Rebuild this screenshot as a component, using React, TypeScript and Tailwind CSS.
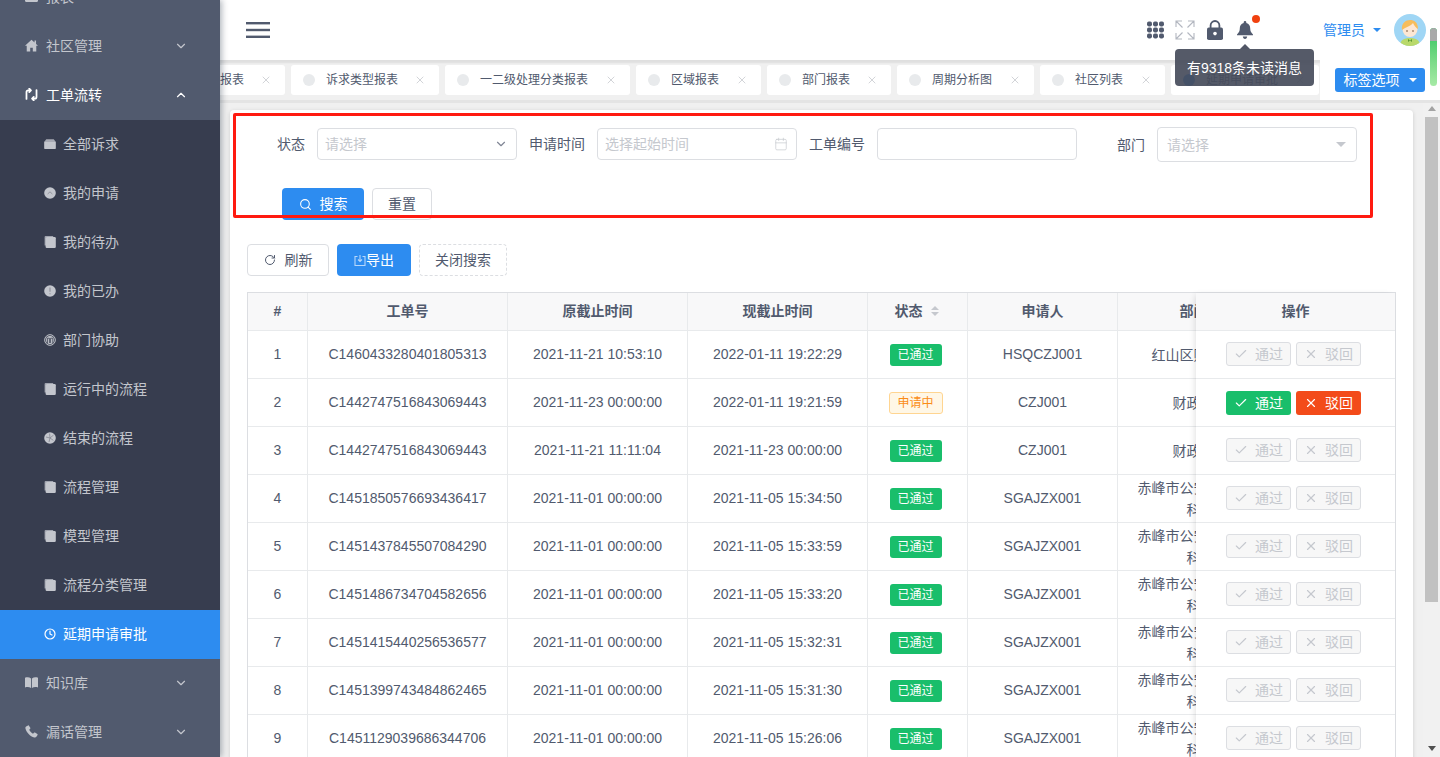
import React from "react";
import { Check, X, Search, RotateCw, ChevronDown, ChevronUp, Clock, Calendar } from "lucide-react";

type IP = { className?: string };

const HomeI = ({ className }: IP) => (
  <svg viewBox="0 0 12 12" className={className} fill="currentColor"><path d="M6 .8 0 6.2h1.6V11.6h3.2V8h2.4v3.6h3.2V6.2H12L10.2 4.6V1.4H8.8v1.9L6 .8z" /></svg>
);
const FlowI = ({ className }: IP) => (
  <svg viewBox="0 0 14 14" className={className} fill="none" stroke="currentColor" strokeWidth="1.9" strokeLinecap="round" strokeLinejoin="round"><path d="M1.600 11.800V4.400c0-1.200.7-1.800 1.800-1.800H6.200M4.600.8 6.400 2.600 4.600 4.400" /><path d="M12.400 2.200v7.400c0 1.200-.7 1.800-1.800 1.800H7.800M9.400 9.600l-1.800 1.800 1.800 1.800" /></svg>
);
const ReportI = ({ className }: IP) => (
  <svg viewBox="0 0 12 12" className={className} fill="currentColor"><rect x="0" y="1" width="12" height="10" rx="1" /></svg>
);
const BookI = ({ className }: IP) => (
  <svg viewBox="0 0 12 12" className={className} fill="currentColor"><path d="M0 1.600C1.800 1 4 1 5.600 2.200V11C4 10 1.800 10 0 10.600V1.600zM12 1.600C10.200 1 8 1 6.400 2.200V11C8 10 10.200 10 12 10.600V1.600z" /></svg>
);
const PhoneI = ({ className }: IP) => (
  <svg viewBox="0 0 12 12" className={className} fill="currentColor"><path d="M2.800.4 1 1.400C.4 1.800.2 2.400.4 3.200 1.400 7 4.600 10.400 8.600 11.500c.8.200 1.500 0 1.900-.6l1.100-1.600c.2-.3.100-.7-.2-.9L9.200 7c-.3-.2-.6-.1-.9.100L7.400 8C6 7.200 4.600 5.700 3.900 4.300l.9-.9c.2-.2.300-.6.100-.9L3.600.6C3.400.3 3.100.3 2.800.4z" /></svg>
);
const FilingI = ({ className }: IP) => (
  <svg viewBox="0 0 14 12" className={className} fill="currentColor"><path d="M2.600.6h8.800L13.600 3.400H.4z" opacity=".8" /><rect x=".2" y="3" width="13.600" height="8.800" rx=".8" /></svg>
);
const DropI = ({ className }: IP) => (
  <svg viewBox="0 0 12 12" className={className}><circle cx="6" cy="6" r="5.800" fill="currentColor" /><path d="M3.600 7 6 4.800 8.400 7" fill="none" stroke="#8d909a" strokeWidth=".9" /></svg>
);
const CopyI = ({ className }: IP) => (
  <svg viewBox="0 0 12 12" className={className} fill="currentColor"><path d="M1.600 0h7.600v1H2v8.600H.6V1A1 1 0 0 1 1.600 0z" opacity=".75" /><rect x="1.600" y="1" width="10.200" height="11" rx="1.200" /></svg>
);
const AlertI = ({ className }: IP) => (
  <svg viewBox="0 0 12 12" className={className}><circle cx="6" cy="6" r="5.800" fill="currentColor" /><path d="M6 2.600v4.200M6 8.200v1" stroke="#8d909a" strokeWidth="1.100" /></svg>
);
const PeopleI = ({ className }: IP) => (
  <svg viewBox="0 0 12 12" className={className}><circle cx="6" cy="6" r="5.300" fill="none" stroke="currentColor" strokeWidth="1" /><circle cx="6" cy="6" r="4" fill="currentColor" /><path d="M3.400 9V4.200h2V9M6.600 9V4.200h2.200V9" fill="none" stroke="#373d4f" strokeWidth=".8" /></svg>
);
const ApertureI = ({ className }: IP) => (
  <svg viewBox="0 0 12 12" className={className}><circle cx="6" cy="6" r="5.800" fill="currentColor" /><path d="M6 6 9.600 3M6 6 2 5M6 6l-1 4M6 6l3.400 2.400M6 6 5.600 1.600" stroke="#7c808b" strokeWidth=".7" /></svg>
);
const GridI = ({ className }: IP) => (
  <svg viewBox="0 0 17 18" className={className} fill="currentColor">
    {[2.5, 8.5, 14.5].flatMap((x) => [3, 9, 15].map((y) => <rect key={`${x}-${y}`} x={x - 2.5} y={y - 2.4} width="5" height="4.800" rx="1.800" />))}
  </svg>
);
const FullI = ({ className }: IP) => (
  <svg viewBox="0 0 20 20" className={className} fill="none" stroke="currentColor" strokeWidth="1.100"><path d="M1 7V1h6M1 1l6.500 6.500M13 1h6v6M19 1l-6.500 6.500M1 13v6h6M1 19l6.500-6.500M19 13v6h-6M19 19l-6.500-6.500" /></svg>
);
const LockI = ({ className }: IP) => (
  <svg viewBox="0 0 16 20" className={className}><path d="M3.600 9V5.400a4.400 4.400 0 0 1 8.800 0V9" fill="none" stroke="currentColor" strokeWidth="1.800" /><rect x="0" y="7.600" width="16" height="12.400" rx="1.800" fill="currentColor" /><circle cx="8" cy="13.600" r="1.800" fill="#fff" /></svg>
);
const BellI = ({ className }: IP) => (
  <svg viewBox="0 0 16 18" className={className} fill="currentColor"><path d="M8 0c.8 0 1.300.6 1.300 1.300v.6c2.700.6 3.900 2.700 3.900 5.300 0 3 .9 4.200 2.800 6.200v.9H0v-.9c1.900-2 2.800-3.200 2.800-6.200 0-2.600 1.200-4.700 3.900-5.300v-.6C6.700.6 7.200 0 8 0z" /><path d="M5.800 15.600h4.400C10 17 9.200 18 8 18s-2-1-2.200-2.400z" /></svg>
);
const AvatarI = ({ className }: IP) => (
  <svg viewBox="0 0 32 32" className={className}>
    <defs><clipPath id="avc"><circle cx="16" cy="16" r="16" /></clipPath></defs>
    <g clipPath="url(#avc)">
      <rect width="32" height="32" fill="#9fd6f5" />
      <path d="M6 32c0-6 4-8 10-8s10 2 10 8z" fill="#b9d96a" />
      <path d="M14 25l2 1.500 2-1.500v3l-2-1.500-2 1.500z" fill="#5d9a33" />
      <circle cx="16" cy="15.500" r="7.500" fill="#fde7d3" />
      <path d="M8 16c-1-7 4-10 8-10s8 2 8 9c-2-1-4-4-5-6-2 3-7 4-11 7z" fill="#f6bd5b" />
      <circle cx="13" cy="17" r=".8" fill="#6b4a2e" />
      <circle cx="19" cy="17" r=".8" fill="#6b4a2e" />
    </g>
  </svg>
);

const menuTop = "flex h-[49px] shrink-0 items-center pb-[2px] pl-[25px] text-sm";
const menuSub = "flex h-[49px] shrink-0 items-center pb-[2px] pl-[44px] text-sm";

const subs: [string, React.FC<IP>][] = [
  ["全部诉求", FilingI],
  ["我的申请", DropI],
  ["我的待办", CopyI],
  ["我的已办", AlertI],
  ["部门协助", PeopleI],
  ["运行中的流程", CopyI],
  ["结束的流程", ApertureI],
  ["流程管理", CopyI],
  ["模型管理", CopyI],
  ["流程分类管理", CopyI],
];

function Top({ label, Icon, open }: { label: string; Icon: React.FC<IP>; open?: boolean }) {
  return (
    <div className={`${menuTop} ${open ? "text-white" : "text-[#c3c6cd]"}`}>
      <Icon className="h-[13px] w-[13px] shrink-0" />
      <span className="ml-[8px]">{label}</span>
      {open ? (
        <ChevronUp className="ml-auto mr-[32px] h-[14px] w-[14px]" strokeWidth={2} />
      ) : (
        <ChevronDown className="ml-auto mr-[32px] h-[14px] w-[14px]" strokeWidth={2} />
      )}
    </div>
  );
}

const tabs = [
  { t: "诉求类型报表", w: "w-[148px]" },
  { t: "一二级处理分类报表", w: "w-[185px]" },
  { t: "区域报表", w: "w-[125px]" },
  { t: "部门报表", w: "w-[124px]" },
  { t: "周期分析图", w: "w-[137px]" },
  { t: "社区列表", w: "w-[125px]" },
  { t: "延期申请审批", w: "w-[148px]", active: true },
];

function Tab({ t, w, active }: { t: string; w: string; active?: boolean }) {
  return (
    <div className={`flex h-[30px] shrink-0 items-center rounded-[3px] bg-white pl-[12px] pr-[13px] text-xs text-[#515a6e] ${w}`}>
      <span className={`h-[12px] w-[12px] rounded-full ${active ? "bg-[#2d8cf0]" : "bg-[#e8eaec]"}`} />
      <span className="ml-[11px] whitespace-nowrap">{t}</span>
      <X className="ml-auto h-[12px] w-[12px] text-[#b4b7be]" strokeWidth={1.2} />
    </div>
  );
}

type Row = { n: number; id: string; a: string; b: string; st: "ok" | "ing"; u: string; d: string; on?: boolean };
const FAR = "赤峰市公安局交警科";
const rows: Row[] = [
  { n: 1, id: "C1460433280401805313", a: "2021-11-21 10:53:10", b: "2022-01-11 19:22:29", st: "ok", u: "HSQCZJ001", d: "红山区财政局" },
  { n: 2, id: "C1442747516843069443", a: "2021-11-23 00:00:00", b: "2022-01-11 19:21:59", st: "ing", u: "CZJ001", d: "财政局", on: true },
  { n: 3, id: "C1442747516843069443", a: "2021-11-21 11:11:04", b: "2021-11-23 00:00:00", st: "ok", u: "CZJ001", d: "财政局" },
  { n: 4, id: "C1451850576693436417", a: "2021-11-01 00:00:00", b: "2021-11-05 15:34:50", st: "ok", u: "SGAJZX001", d: FAR },
  { n: 5, id: "C1451437845507084290", a: "2021-11-01 00:00:00", b: "2021-11-05 15:33:59", st: "ok", u: "SGAJZX001", d: FAR },
  { n: 6, id: "C1451486734704582656", a: "2021-11-01 00:00:00", b: "2021-11-05 15:33:20", st: "ok", u: "SGAJZX001", d: FAR },
  { n: 7, id: "C1451415440256536577", a: "2021-11-01 00:00:00", b: "2021-11-05 15:32:31", st: "ok", u: "SGAJZX001", d: FAR },
  { n: 8, id: "C1451399743484862465", a: "2021-11-01 00:00:00", b: "2021-11-05 15:31:30", st: "ok", u: "SGAJZX001", d: FAR },
  { n: 9, id: "C1451129039686344706", a: "2021-11-01 00:00:00", b: "2021-11-05 15:26:06", st: "ok", u: "SGAJZX001", d: FAR },
];

const cell = "flex shrink-0 items-center justify-center border-r border-[#e8eaec] text-center";
const tcell = `${cell} pb-[1px]`;
const headRow = "flex h-[38px] border-b border-[#e8eaec] bg-[#f8f8f9] font-bold";
const bodyRow = "flex h-[48px] border-b border-[#e8eaec]";

function Status({ st }: { st: Row["st"] }) {
  return st === "ok" ? (
    <span className="mr-[4px] flex h-[22px] w-[52px] items-center justify-center rounded-[3px] bg-[#19be6b] text-xs text-white">已通过</span>
  ) : (
    <span className="mr-[4px] flex h-[22px] w-[54px] items-center justify-center rounded-[3px] border border-[#ffd591] bg-[#fff7e6] text-xs text-[#fa8c16]">申请中</span>
  );
}

function Action({ kind, on }: { kind: "ok" | "no"; on?: boolean }) {
  const cls = on
    ? kind === "ok"
      ? "bg-[#19be6b] text-white"
      : "bg-[#f34b1a] text-white"
    : "mb-[2px] border border-[#dcdee2] bg-[#f7f7f7] text-[#c5c8ce]";
  return (
    <span className={`flex h-[24px] w-[65px] items-center justify-center rounded-[3px] text-sm ${cls}`}>
      {kind === "ok" ? (
        <Check className="h-[14px] w-[14px]" strokeWidth={2} />
      ) : (
        <X className="h-[14px] w-[14px]" strokeWidth={2} />
      )}
      <span className="ml-[7px]">{kind === "ok" ? "通过" : "驳回"}</span>
    </span>
  );
}

function FormItem({ label, children }: { label: string; children: React.ReactNode }) {
  return (
    <div className="flex w-[280px] shrink-0 items-center">
      <label className="w-[80px] shrink-0 pr-[12px] text-right text-sm text-[#515a6e]">{label}</label>
      {children}
    </div>
  );
}

const field = "flex h-[32px] w-[200px] items-center justify-between rounded-[4px] border border-[#dcdee2] bg-white pl-[7px] pr-[8px] text-sm text-[#c5c8ce]";

export default function App() {
  return (
    <div
      className="relative flex h-[757px] w-[1440px] overflow-hidden bg-white text-sm text-[#515a6e]"
      style={{ fontFamily: '"Liberation Sans","Noto Sans CJK SC",sans-serif' }}
    >
      <aside className="z-10 flex h-full w-[220px] shrink-0 flex-col overflow-hidden bg-[#515a6e] shadow-[2px_0_6px_rgba(0,21,41,0.3)]">
        <div className="-mt-[27px] flex flex-col">
          <Top label="报表" Icon={ReportI} />
          <Top label="社区管理" Icon={HomeI} />
          <Top label="工单流转" Icon={FlowI} open />
          <div className="flex flex-col bg-[#373d4f] text-[#c3c6cd]">
            {subs.map(([l, I]) => (
              <div key={l} className={menuSub}>
                <I className="h-[12px] w-[12px] shrink-0" />
                <span className="ml-[7px]">{l}</span>
              </div>
            ))}
            <div className={`${menuSub} bg-[#2d8cf0] text-white`}>
              <Clock className="h-[12px] w-[12px] shrink-0" strokeWidth={2.4} />
              <span className="ml-[7px]">延期申请审批</span>
            </div>
          </div>
          <Top label="知识库" Icon={BookI} />
          <Top label="漏话管理" Icon={PhoneI} />
        </div>
      </aside>

      <div className="flex min-w-0 flex-1 flex-col">
        <header className="flex h-[60px] shrink-0 items-center bg-white pl-[26px]">
          <svg viewBox="0 0 24 16" className="h-[16px] w-[24px] text-[#515a6e]" fill="currentColor">
            <rect y="0" width="24" height="2.400" />
            <rect y="6.800" width="24" height="2.400" />
            <rect y="13.600" width="24" height="2.400" />
          </svg>
          <GridI className="ml-[877px] h-[18px] w-[17px] text-[#515a6e]" />
          <FullI className="ml-[11px] h-[20px] w-[20px] text-[#b3b7c0]" />
          <LockI className="ml-[12px] h-[20px] w-[16px] text-[#515a6e]" />
          <div className="relative ml-[14px] h-[18px] w-[16px]">
            <BellI className="h-[18px] w-[16px] text-[#515a6e]" />
            <span className="absolute -right-[7px] -top-[6px] h-[8px] w-[8px] rounded-full bg-[#f0410f]" />
          </div>
          <span className="ml-[70px] text-sm text-[#2d8cf0]">管理员</span>
          <span className="ml-[8px] h-0 w-0 border-x-[4px] border-t-[4px] border-x-transparent border-t-[#2d8cf0]" />
          <AvatarI className="ml-[13px] h-[32px] w-[32px]" />
        </header>

        <div className="flex h-[40px] shrink-0 bg-[#f0f0f0] shadow-[inset_0_3px_2px_rgba(0,0,0,0.07)]">
          <div className="flex min-w-0 flex-1 items-center gap-[6px] overflow-hidden">
            <div className="flex h-[30px] w-[65px] shrink-0 items-center rounded-r-[3px] bg-white text-xs">
              <span>报表</span>
              <X className="ml-[16px] h-[12px] w-[12px] text-[#b4b7be]" strokeWidth={1.2} />
            </div>
            {tabs.map((t) => (
              <Tab key={t.t} t={t.t} w={t.w} active={t.active} />
            ))}
          </div>
          <div className="flex w-[120px] shrink-0 items-center bg-white pl-[15px]">
            <button className="flex h-[24px] w-[90px] items-center justify-center rounded-[3px] bg-[#2d8cf0] text-sm text-white">
              标签选项
              <span className="ml-[9px] h-0 w-0 border-x-[4px] border-t-[4px] border-x-transparent border-t-white" />
            </button>
          </div>
        </div>
        <div className="h-[3px] shrink-0 bg-[#e4e4e4]" />

        <div className="flex min-h-0 flex-1">
          <main className="min-w-0 flex-1 overflow-hidden bg-[#f0f0f0] px-[10px] pt-[7px]">
            <div className="relative h-[700px] rounded-[4px] bg-white px-[17px] pt-[18px] shadow-[0_1px_4px_rgba(0,0,0,0.15)]">
              <div className="absolute left-[3px] top-[3px] z-20 h-[105px] w-[1140px] rounded-[2px] border-[3px] border-[#ff1a10]" />

              <div className="-ml-[10px] flex items-start">
                <FormItem label="状态">
                  <div className={field}>
                    <span>请选择</span>
                    <ChevronDown className="h-[14px] w-[14px] text-[#808695]" strokeWidth={2} />
                  </div>
                </FormItem>
                <FormItem label="申请时间">
                  <div className={field}>
                    <span>选择起始时间</span>
                    <Calendar className="h-[14px] w-[14px] text-[#c5c8ce]" strokeWidth={1.2} />
                  </div>
                </FormItem>
                <FormItem label="工单编号">
                  <div className={field} />
                </FormItem>
                <FormItem label="部门">
                  <div className="-mt-[1px] flex h-[35px] w-[200px] items-center justify-between rounded-[4px] border border-[#dcdee2] pl-[9px] pr-[10px] text-sm text-[#c5c8ce]">
                    <span>请选择</span>
                    <span className="h-0 w-0 border-x-[5px] border-t-[5px] border-x-transparent border-t-[#c5c8ce]" />
                  </div>
                </FormItem>
              </div>

              <div className="ml-[35px] mt-[26px] flex gap-[8px]">
                <button className="flex h-[32px] w-[82px] items-center justify-center rounded-[4px] bg-[#2d8cf0] text-sm text-white">
                  <Search className="h-[13px] w-[13px]" strokeWidth={2} />
                  <span className="ml-[8px]">搜索</span>
                </button>
                <button className="h-[32px] w-[60px] rounded-[4px] border border-[#dcdee2] bg-white text-sm">重置</button>
              </div>

              <div className="mt-[24px] flex gap-[8px]">
                <button className="flex h-[32px] w-[82px] items-center justify-center rounded-[4px] border border-[#dcdee2] bg-white text-sm">
                  <RotateCw className="h-[12px] w-[12px]" strokeWidth={2} />
                  <span className="ml-[9px]">刷新</span>
                </button>
                <button className="flex h-[32px] w-[74px] items-center justify-center rounded-[4px] bg-[#2d8cf0] text-sm text-white">
                  <svg viewBox="0 0 12 12" className="h-[12px] w-[12px] text-[#b7d8fb]" fill="none" stroke="currentColor" strokeWidth="1.100">
                    <path d="M3.500 2.500H1v9h10v-9H8.500M6 1v6M4 5.500 6 7.500l2-2" />
                  </svg>
                  <span>导出</span>
                </button>
                <button className="h-[32px] w-[88px] rounded-[4px] border border-dashed border-[#dcdee2] bg-white text-sm">关闭搜索</button>
              </div>

              <div className="mt-[16px] flex border-l border-r border-t border-[#dcdee2]">
                <div className="min-w-0 flex-1 overflow-hidden">
                  <div className="w-[1022px]">
                    <div className={headRow}>
                      <div className={`${tcell} w-[60px]`}>#</div>
                      <div className={`${tcell} w-[200px]`}>工单号</div>
                      <div className={`${tcell} w-[180px]`}>原截止时间</div>
                      <div className={`${tcell} w-[180px]`}>现截止时间</div>
                      <div className={`${tcell} w-[100px]`}>
                        状态
                        <span className="ml-[8px] mr-[2px] flex flex-col gap-[2px]">
                          <span className="h-0 w-0 border-x-[4px] border-b-[4px] border-x-transparent border-b-[#c5c8ce]" />
                          <span className="h-0 w-0 border-x-[4px] border-t-[4px] border-x-transparent border-t-[#c5c8ce]" />
                        </span>
                      </div>
                      <div className={`${tcell} w-[150px]`}>申请人</div>
                      <div className={`${tcell} w-[152px]`}>部门</div>
                    </div>
                    {rows.map((r) => (
                      <div key={r.n} className={bodyRow}>
                        <div className={`${tcell} w-[60px]`}>{r.n}</div>
                        <div className={`${tcell} w-[200px]`}>{r.id}</div>
                        <div className={`${tcell} w-[180px]`}>{r.a}</div>
                        <div className={`${tcell} w-[180px]`}>{r.b}</div>
                        <div className={`${cell} w-[100px]`}><Status st={r.st} /></div>
                        <div className={`${tcell} w-[150px]`}>{r.u}</div>
                        <div className={`${cell} w-[152px] px-[18px] leading-[22px]`}>{r.d}</div>
                      </div>
                    ))}
                  </div>
                </div>
                <div className="z-10 w-[199px] shrink-0 bg-white shadow-[-3px_0_6px_-2px_rgba(0,0,0,0.12)]">
                  <div className={`${headRow} items-center justify-center pb-[1px]`}>操作</div>
                  {rows.map((r) => (
                    <div key={r.n} className={`${bodyRow} items-center gap-[5px] pl-[30px]`}>
                      <Action kind="ok" on={r.on} />
                      <Action kind="no" on={r.on} />
                    </div>
                  ))}
                </div>
              </div>
            </div>
          </main>

          <div className="flex w-[17px] shrink-0 flex-col items-center bg-[#f1f1f1]">
            <span className="mt-[3px] h-0 w-0 border-x-[4px] border-b-[5px] border-x-transparent border-b-[#a3a3a3]" />
            <div className="mt-[6px] h-[485px] w-[13px] bg-[#c1c1c1]" />
            <span className="mb-[6px] mt-auto h-0 w-0 border-x-[4px] border-t-[5px] border-x-transparent border-t-[#505050]" />
          </div>
        </div>
      </div>

      <div className="absolute left-[1430px] top-[28px] z-30 h-[58px] w-[7px] overflow-hidden rounded-[4px] bg-gradient-to-b from-[#22c55e] to-[#a6eaa6]">
        <div className="h-[13px] bg-[#a9a9a9]" />
      </div>

      <div className="absolute left-[1175px] top-[49px] z-30 flex h-[37px] w-[139px] items-center justify-center rounded-[4px] bg-[rgba(70,76,91,0.92)] text-sm text-white">
        有9318条未读消息
        <span className="absolute -top-[5px] left-[65px] h-0 w-0 border-x-[5px] border-b-[5px] border-x-transparent border-b-[#515666]" />
      </div>
    </div>
  );
}
